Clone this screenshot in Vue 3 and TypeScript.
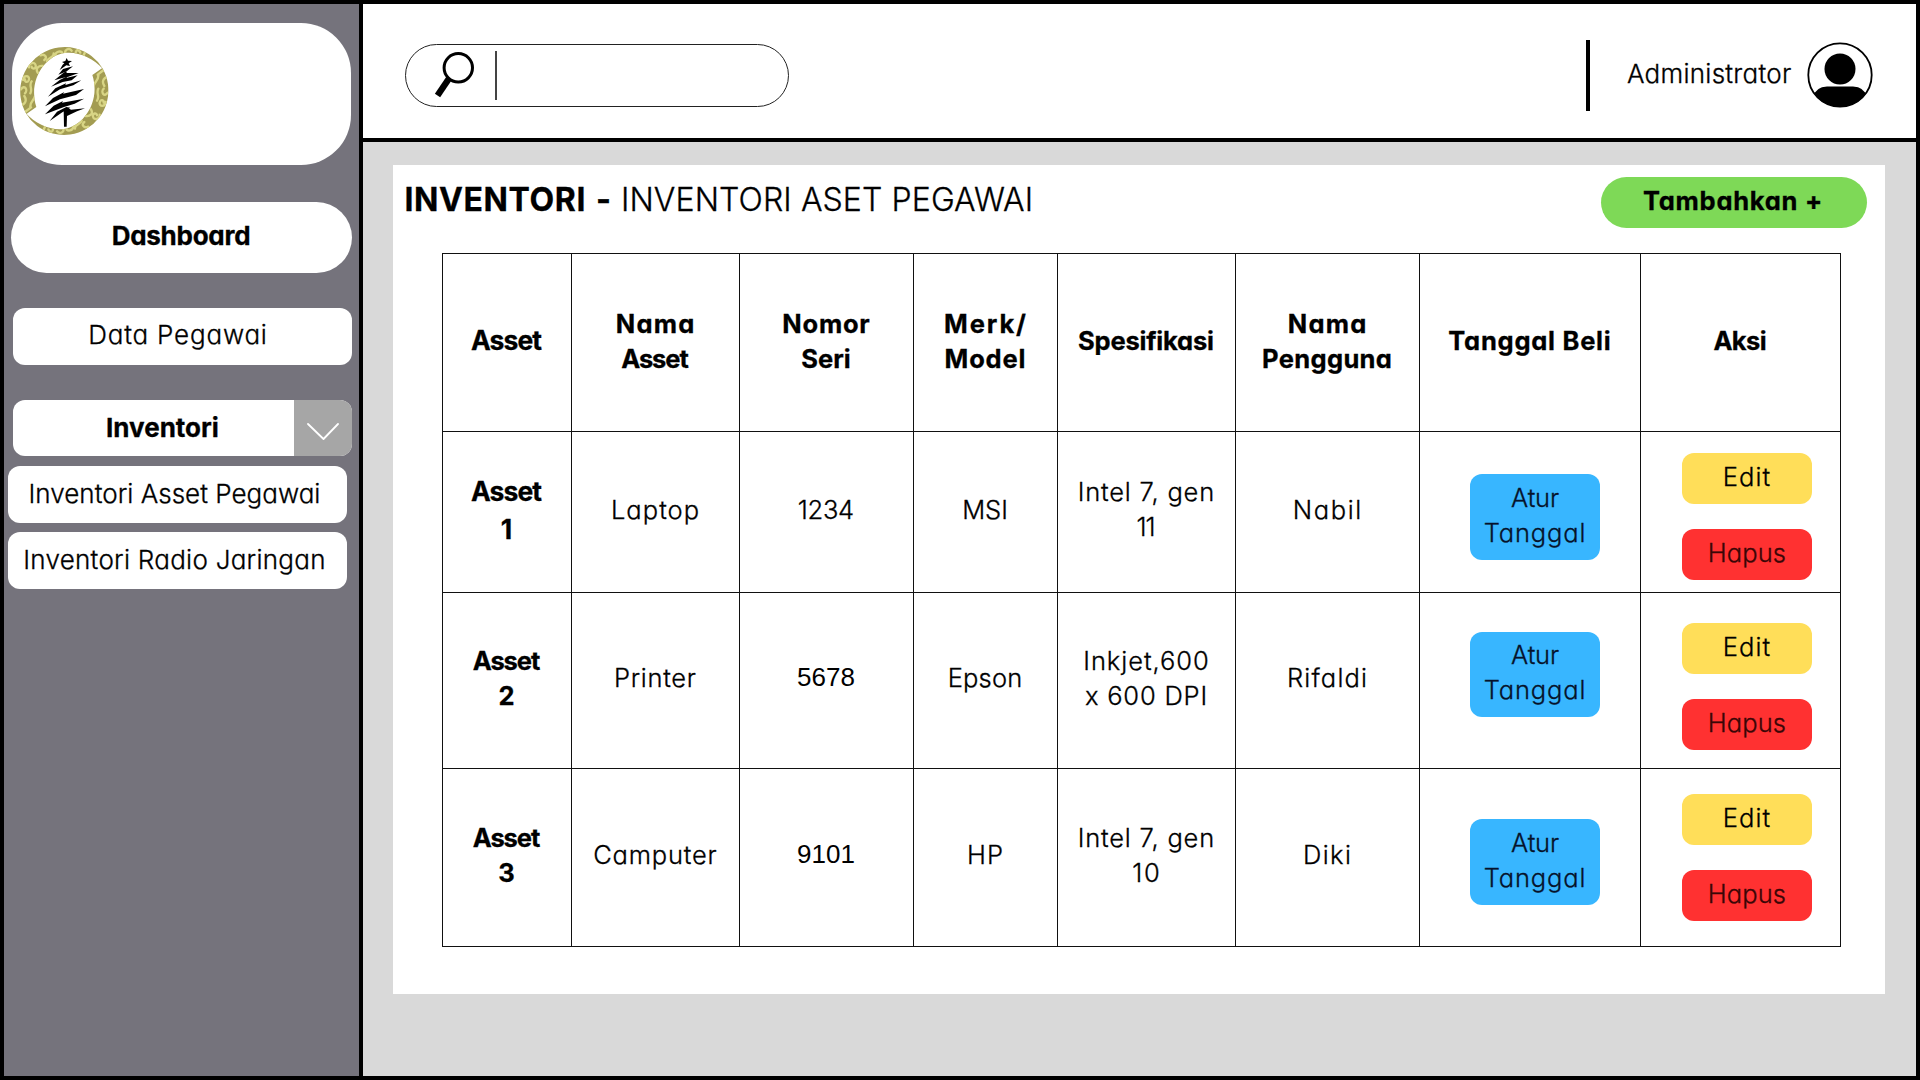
<script setup lang="ts">
interface Line {
  text: string
  /** letter spacing in px */
  ls: number
  plain?: boolean
}

interface AssetRow {
  no: string
  cells: Line[][]
  dateTop: number
  actionTop: number
}

const spacing = (l: Line) => ({ letterSpacing: `${l.ls}px`, marginRight: `${-l.ls}px` })

const headers: Line[][] = [
  [{ text: 'Asset', ls: -0.9 }],
  [{ text: 'Nama', ls: 1.2 }, { text: 'Asset', ls: -1.1 }],
  [{ text: 'Nomor', ls: 0.75 }, { text: 'Seri', ls: 0 }],
  [{ text: 'Merk/', ls: 1.9 }, { text: 'Model', ls: 0.83 }],
  [{ text: 'Spesifikasi', ls: -0.2 }],
  [{ text: 'Nama', ls: 1.2 }, { text: 'Pengguna', ls: 0.34 }],
  [{ text: 'Tanggal Beli', ls: 0.75 }],
  [{ text: 'Aksi', ls: -0.6 }],
]

const rows: AssetRow[] = [
  {
    no: '1',
    cells: [
      [{ text: 'Laptop', ls: 1.05 }],
      [{ text: '1234', ls: -0.3 }],
      [{ text: 'MSI', ls: -0.04 }],
      [{ text: 'Intel 7, gen', ls: 0.8 }, { text: '11', ls: -1.04 }],
      [{ text: 'Nabil', ls: 1.6 }],
    ],
    dateTop: 42,
    actionTop: 21,
  },
  {
    no: '2',
    cells: [
      [{ text: 'Printer', ls: 0.7 }],
      [{ text: '5678', ls: 0, plain: true }],
      [{ text: 'Epson', ls: 0.15 }],
      [{ text: 'Inkjet,600', ls: 0.94 }, { text: 'x 600 DPI', ls: 0.8 }],
      [{ text: 'Rifaldi', ls: 1.2 }],
    ],
    dateTop: 38.5,
    actionTop: 30,
  },
  {
    no: '3',
    cells: [
      [{ text: 'Camputer', ls: 0.8 }],
      [{ text: '9101', ls: 0, plain: true }],
      [{ text: 'HP', ls: 1.12 }],
      [{ text: 'Intel 7, gen', ls: 0.8 }, { text: '10', ls: 1.8 }],
      [{ text: 'Diki', ls: 1.35 }],
    ],
    dateTop: 50,
    actionTop: 25,
  },
]
</script>

<template>
  <div class="app">
    <aside class="sidebar">
      <div class="brand">
        <svg class="logo" viewBox="28 48 270 270" aria-hidden="true">
          <defs>
            <clipPath id="ring">
              <path d="M50 252A133 133 0 0 1 280 117C250 84 206 64 165 69C108 76 54 150 80 231Z" />
            </clipPath>
            <g id="band">
              <g clip-path="url(#ring)">
                <path fill="#a39c52" d="M20 40h280v220H20z" />
                <g fill="none" stroke="#d8d585" stroke-width="7" stroke-linecap="round">
                  <path d="M34 226c14-4 18-16 10-28M62 232c-2-18 12-20 14-34M34 178c10-16 22 2 12 12M62 190c8-14-6-24 4-36M40 150c2-16 20-14 18-2s-14 8-12 0M58 112c-2-14 18-18 20-6s-12 12-12 4M84 128c-8-14 4-22 16-20M92 76c14-6 22 6 12 14M112 94c4-14 22-10 20-24M136 78c2-16 20-16 22-8M168 72c-6-12 10-20 18-10M198 70c0-14 12-10 14-2M222 76l6-14M46 246l18-14" />
                  <path stroke-width="5" d="M84 62c30-22 70-22 110-12" />
                </g>
              </g>
            </g>
          </defs>
          <use href="#band" />
          <use href="#band" transform="rotate(180 164 183)" />
          <g fill="#000">
            <path d="M171 84l4 8 12 1-10 7 4 8-11-2-20 14 9-16 5-4-7-4 10-3z" />
            <path d="M146 134l14-17 30-8-15 12-9 5z" />
            <path d="M134 151l24-20 12-9 1 7 36 0-31 11-18 4z" />
            <path d="M124 170l26-20 20-10 2 3 32-7-18 15-27 5z" />
            <path d="M115 200l22-25 32-15-2 5 48-14-24 15-40 12z" />
            <path d="M106 229l24-25 34-18-4 5 63-14-24 18-48 13z" />
            <path d="M106 253l26-26 28-14-3 5 66-12-28 15-32 10z" />
            <path d="M120 273l22-28 28-14 12 2-24 14z" />
            <path d="M162 238l14-4 8 5 42-4-24 9-30 14-1 32h-8z" />
          </g>
        </svg>
      </div>
      <nav class="menu">
        <a class="item dashboard"><span class="b t-dash">Dashboard</span></a>
        <a class="item data"><span class="t-data">Data Pegawai</span></a>
        <a class="item inventory">
          <span class="b inventory-label">Inventori</span>
          <span class="toggle">
            <svg width="32" height="18" viewBox="0 0 32 18"><path d="M1 1l15.500 15L31 1" fill="none" stroke="#fff" stroke-width="1.8" stroke-linecap="round" stroke-linejoin="round" /></svg>
          </span>
        </a>
        <a class="item sub"><span class="t-asset">Inventori Asset Pegawai</span></a>
        <a class="item sub"><span class="t-radio">Inventori Radio Jaringan</span></a>
      </nav>
    </aside>

    <div class="main">
      <header class="topbar">
        <div class="search">
          <svg width="42" height="50" viewBox="0 0 42 50">
            <path d="M16 28.500L4.500 45.500" stroke="#000" stroke-width="6.4" />
            <circle cx="25.3" cy="17.8" r="14.2" fill="#fff" stroke="#000" stroke-width="3" />
          </svg>
          <i class="caret"></i>
        </div>
        <div class="user">
          <i class="rule"></i>
          <span class="user-name">Administrator</span>
          <svg class="avatar" width="66" height="66" viewBox="0 0 66 66">
            <defs><clipPath id="face"><circle cx="33" cy="33" r="32" /></clipPath></defs>
            <circle cx="33" cy="33" r="31.7" fill="#fff" stroke="#000" stroke-width="1.8" />
            <circle cx="33" cy="27" r="15.5" />
            <path clip-path="url(#face)" d="M5 66V56q4-11.500 15-11.500h26Q57 44.500 61 56v10z" />
          </svg>
        </div>
      </header>

      <section class="content">
        <div class="panel">
          <div class="panel-head">
            <h1 class="title"><b class="title-b">INVENTORI</b><b class="dash">-</b><span class="title-l">INVENTORI ASET PEGAWAI</span></h1>
            <button class="add"><span>Tambahkan +</span></button>
          </div>

          <div class="table">
            <div v-for="(h, i) in headers" :key="'h' + i" class="cell head" :class="{ first: i === 0 }">
              <span v-for="l in h" :key="l.text" :style="spacing(l)">{{ l.text }}</span>
            </div>
            <template v-for="row in rows" :key="row.no">
              <div class="cell head first" :class="{ loose: row.no === '1', small: row.no !== '1' }">
                <span :style="spacing({ text: 'Asset', ls: row.no === '1' ? -0.9 : -1.1 })">Asset</span>
                <span>{{ row.no }}</span>
              </div>
              <div v-for="(c, i) in row.cells" :key="i" class="cell">
                <span v-for="l in c" :key="l.text" :class="{ plain: l.plain }" :style="spacing(l)">{{ l.text }}</span>
              </div>
              <div class="cell date" :style="{ paddingTop: row.dateTop + 'px' }">
                <button class="btn blue">
                  <span class="t-atur">Atur</span>
                  <span class="t-tanggal">Tanggal</span>
                </button>
              </div>
              <div class="cell actions" :style="{ paddingTop: row.actionTop + 'px' }">
                <button class="btn yellow"><span class="t-edit">Edit</span></button>
                <button class="btn red"><span class="t-hapus">Hapus</span></button>
              </div>
            </template>
          </div>
        </div>
      </section>
    </div>
  </div>
</template>

<style>
body {
  margin: 0;
}
</style>

<style scoped>
.app {
  box-sizing: border-box;
  width: 1920px;
  height: 1080px;
  display: flex;
  border: 4px solid #000;
  overflow: hidden;
  background: #d9d9d9;
  color: #000;
  font-family: Inter, 'Liberation Sans', sans-serif;
  font-feature-settings: 'cv11';
  font-size: 26px;
  font-weight: 300;
  line-height: 35px;
  white-space: nowrap;
  -webkit-text-stroke: 0.3px currentColor;
}
button {
  border: 0;
  margin: 0;
  padding: 0;
  font: inherit;
  font-feature-settings: inherit;
  color: inherit;
}
.b {
  font-weight: 700;
}
.sidebar {
  box-sizing: border-box;
  width: 359px;
  flex: none;
  border-right: 4px solid #000;
  background: #75737c;
  padding-top: 19px;
}
.brand {
  box-sizing: border-box;
  width: 339px;
  height: 142px;
  margin-left: 8px;
  border-radius: 50px;
  background: #fff;
  padding: 23px 0 0 7px;
}
.logo {
  display: block;
  width: 90px;
  height: 90px;
}
.menu {
  display: flex;
  flex-direction: column;
  padding-top: 37px;
}
.item {
  box-sizing: border-box;
  display: flex;
  justify-content: center;
  width: 339px;
  height: 57px;
  margin-left: 9px;
  border-radius: 12px;
  background: #fff;
}
.dashboard {
  width: 341px;
  height: 71px;
  margin-left: 7px;
  border-radius: 35.5px;
  padding: 16px 1px 0 0;
}
.t-dash {
  letter-spacing: -0.25px;
}
.data {
  margin-top: 35px;
  padding: 9px 9px 0 0;
}
.t-data {
  letter-spacing: 0.8px;
}
.inventory {
  margin-top: 35px;
  height: 56px;
  justify-content: space-between;
  overflow: hidden;
}
.inventory-label {
  padding: 10px 0 0 93px;
  letter-spacing: 0;
}
.toggle {
  box-sizing: border-box;
  width: 58px;
  padding: 23px 0 0 13px;
  background: #a6a6a6;
  line-height: 0;
}
.sub {
  margin: 10px 0 0 4px;
  padding: 10px 6px 0 0;
}
.sub + .sub {
  margin-top: 9px;
}
.t-asset {
  letter-spacing: 0.02px;
}
.t-radio {
  letter-spacing: 0.26px;
}

.main {
  flex: 1;
  display: flex;
  flex-direction: column;
}
.topbar {
  box-sizing: border-box;
  height: 138px;
  border-bottom: 4px solid #000;
  background: #fff;
  display: flex;
  justify-content: space-between;
  align-items: flex-start;
  padding: 35.5px 43px 0 42px;
}
.search {
  box-sizing: border-box;
  margin-top: 4px;
  width: 384px;
  height: 63.5px;
  border: 1.5px solid #222;
  border-radius: 32px;
  display: flex;
  align-items: flex-start;
  padding: 5.5px 0 0 27px;
}
.caret {
  width: 2px;
  height: 49px;
  margin: 1px 0 0 20px;
  background: #444;
}
.user {
  display: flex;
  align-items: flex-start;
}
.rule {
  width: 4px;
  height: 71px;
  background: #000;
}
.user-name {
  margin: 16px 15.5px 0 36.5px;
  letter-spacing: 0.26px;
}
.avatar {
  margin-top: 2px;
}

.content {
  flex: 1;
  padding: 23px 31px 0 30px;
}
.panel {
  box-sizing: border-box;
  height: 829px;
  background: #fff;
}
.panel-head {
  display: flex;
  justify-content: space-between;
  align-items: flex-start;
  height: 88px;
  padding: 0 18px 0 11.5px;
}
.title {
  display: flex;
  margin: 15px 0 0;
  font-size: 32px;
  font-weight: 300;
  line-height: 40px;
}
.title-b {
  font-weight: 700;
  letter-spacing: 0.6px;
}
.title-l {
  letter-spacing: 0.1px;
}
.dash {
  font-weight: 700;
  margin: 0 10px 0 10px;
}
.add {
  box-sizing: border-box;
  width: 266px;
  height: 50.5px;
  margin-top: 12px;
  padding: 0 2px 3px 0;
  border-radius: 26px;
  background: #7ed957;
  font-size: 25.5px;
  font-weight: 700;
  letter-spacing: 0.72px;
}

.table {
  display: grid;
  grid-template-columns: 129px 168px 174px 144px 178px 184px 221px 200px;
  grid-template-rows: 178px 161px 176px 178px;
  width: max-content;
  margin-left: 49px;
  border: solid #111;
  border-width: 1px 0 0 1px;
  font-size: 25.5px;
}
.cell {
  box-sizing: border-box;
  border: solid #111;
  border-width: 0 1px 1px 0;
  display: flex;
  flex-direction: column;
  align-items: center;
  justify-content: center;
  padding: 0 1px 5.5px 0;
}
.head {
  font-weight: 700;
  padding-bottom: 3.5px;
}
.first {
  font-size: 26.5px;
}
.loose {
  line-height: 37.5px;
  padding-bottom: 3px;
}
.small {
  font-size: 25.5px;
  padding-bottom: 4.5px;
}
.plain {
  font-family: 'Liberation Sans', Arial, sans-serif;
  font-size: 26px;
  font-weight: 400;
  -webkit-text-stroke: 0;
}
.date,
.actions {
  align-items: flex-start;
  justify-content: flex-start;
  padding-bottom: 0;
}
.date {
  padding-left: 50px;
}
.actions {
  padding-left: 41px;
  gap: 25.5px;
}
.btn {
  box-sizing: border-box;
  display: flex;
  flex-direction: column;
  align-items: center;
  width: 130px;
  height: 50.5px;
  padding-top: 5.5px;
  border-radius: 12px;
}
.blue {
  height: 85.5px;
  background: #38b6ff;
  color: #06122b;
}
.yellow {
  background: #ffde59;
}
.red {
  background: #ff3131;
  color: #3a0606;
}
.t-atur {
  letter-spacing: -0.2px;
}
.t-tanggal {
  letter-spacing: 0.85px;
}
.t-edit {
  letter-spacing: 1.06px;
}
.t-hapus {
  letter-spacing: 0.1px;
}
</style>
